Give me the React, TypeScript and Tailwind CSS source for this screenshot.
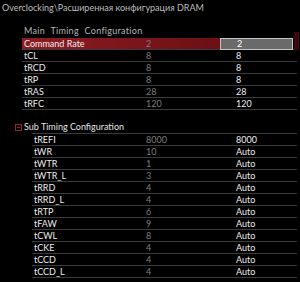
import React from "react";

type Row = { name: string; current: string; value: string };

const mainRows: Row[] = [
  { name: "Command Rate", current: "2", value: "2" },
  { name: "tCL", current: "8", value: "8" },
  { name: "tRCD", current: "8", value: "8" },
  { name: "tRP", current: "8", value: "8" },
  { name: "tRAS", current: "28", value: "28" },
  { name: "tRFC", current: "120", value: "120" },
];

const subRows: Row[] = [
  { name: "tREFI", current: "8000", value: "8000" },
  { name: "tWR", current: "10", value: "Auto" },
  { name: "tWTR", current: "1", value: "Auto" },
  { name: "tWTR_L", current: "3", value: "Auto" },
  { name: "tRRD", current: "4", value: "Auto" },
  { name: "tRRD_L", current: "4", value: "Auto" },
  { name: "tRTP", current: "6", value: "Auto" },
  { name: "tFAW", current: "9", value: "Auto" },
  { name: "tCWL", current: "8", value: "Auto" },
  { name: "tCKE", current: "4", value: "Auto" },
  { name: "tCCD", current: "4", value: "Auto" },
  { name: "tCCD_L", current: "4", value: "Auto" },
];

function MainRow({ row, selected }: { row: Row; selected?: boolean }) {
  return (
    <div className="flex h-[12px] items-center border-b border-[#3a3a3a] pl-[2px] leading-[11px]">
      <div
        className={
          selected
            ? "flex h-[11px] w-[198px] items-center bg-gradient-to-r from-[#8e1c23] to-[#6c1015] -ml-[2px] pl-[2px]"
            : "flex h-[11px] w-[196px] items-center"
        }
      >
        <span className="w-[122px] text-[#ececec]">{row.name}</span>
        <span className="text-[#7c7c7c]">{row.current}</span>
      </div>
      {selected ? (
        <div className="flex h-[12px] w-[73px] items-center border border-[#c4c4c4] bg-[#6a6a6a] pl-[16px] text-white">
          {row.value}
        </div>
      ) : (
        <span className="pl-[16px] text-[#ececec]">{row.value}</span>
      )}
    </div>
  );
}

function SubRow({ row }: { row: Row }) {
  return (
    <div className="flex h-[12px] items-center border-b border-[#3a3a3a] pl-[2px] leading-[11px]">
      <span className="w-[112px] text-[#ececec]">{row.name}</span>
      <span className="w-[90px] text-[#7c7c7c]">{row.current}</span>
      <span className="text-[#ececec]">{row.value}</span>
    </div>
  );
}

export default function App() {
  return (
    <div className="relative h-[282px] w-[300px] overflow-hidden bg-black font-['Lato',sans-serif] text-[9px]">
      {/* Breadcrumb */}
      <div className="h-[14px] pl-[2px] pt-[1px] leading-[13px] text-[#bdbdbd]">
        Overclocking\Расширенная конфигурация DRAM
      </div>

      {/* Main timing */}
      <div className="mt-[11px] h-[13px] pl-[24px] leading-[12px] tracking-[0.3px] text-[#b4b4b4] [word-spacing:3px]">
        Main Timing Configuration
      </div>
      <div className="ml-[22px] w-[275px]">
        {mainRows.map((r, i) => (
          <MainRow key={r.name} row={r} selected={i === 0} />
        ))}
      </div>

      {/* Sub timing */}
      <div className="mt-[11px] flex h-[12px] items-center pl-[15px] leading-[12px] text-[#e4e4e4]">
        <span className="mr-[2px] flex h-[7px] w-[7px] items-center justify-center border border-[#a3202a]">
          <span className="h-px w-[3px] bg-[#a3202a]" />
        </span>
        Sub Timing Configuration
      </div>
      <div className="ml-[32px] w-[265px] border-t border-[#3a3a3a]">
        {subRows.map((r) => (
          <SubRow key={r.name} row={r} />
        ))}
      </div>

      {/* scrollbar thumb */}
      <div className="absolute right-[1px] top-[32px] h-[18px] w-[5px] bg-[#3a0a0d]" />
    </div>
  );
}
